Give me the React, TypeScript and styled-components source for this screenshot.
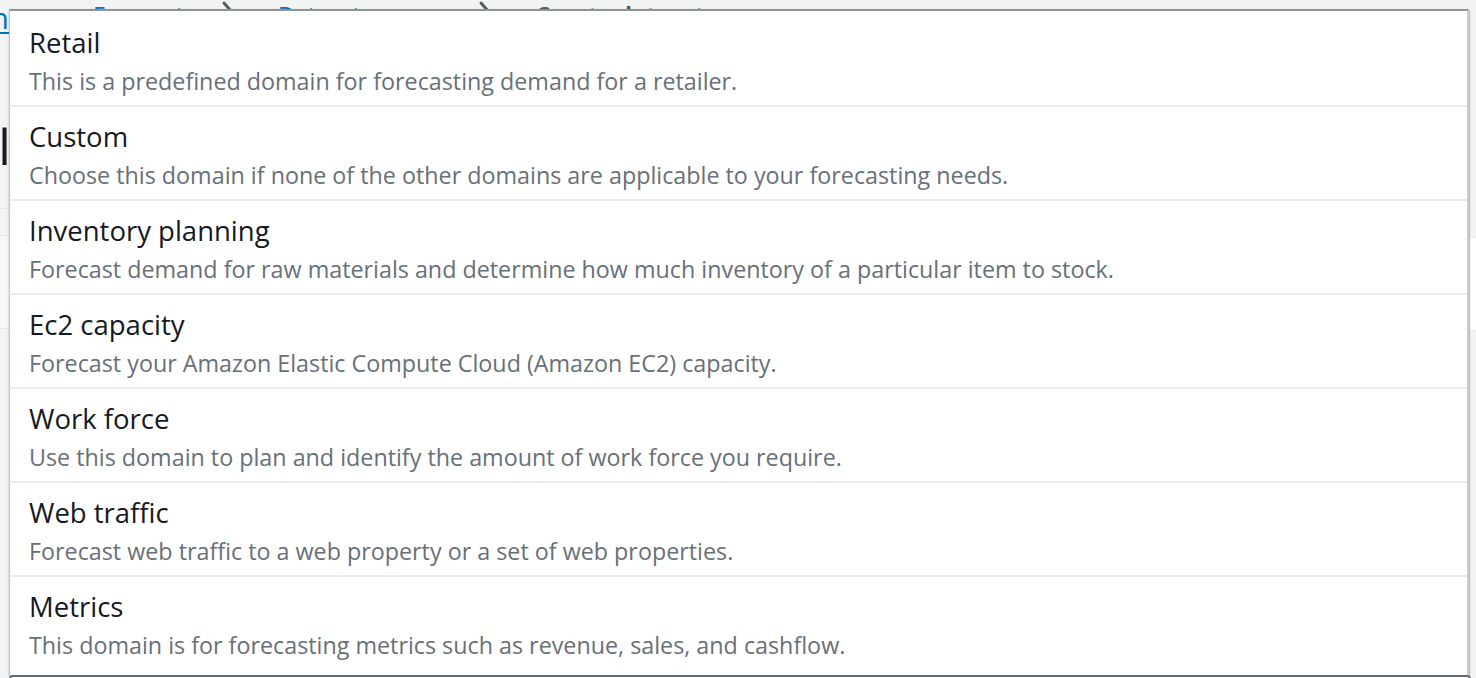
import React from "react";
import styled, { createGlobalStyle } from "styled-components";

const Global = createGlobalStyle`
  html, body { margin: 0; padding: 0; }
  body {
    width: 1476px;
    height: 678px;
    overflow: hidden;
    background: #f2f3f3;
    font-family: "Open Sans", "Noto Sans", Arial, sans-serif;
  }
`;

const Page = styled.div`
  position: relative;
  width: 1476px;
  height: 678px;
  overflow: hidden;
  background: #f2f3f3;
`;

const Body = styled.div`
  display: grid;
  grid-template-columns: 9px 1fr 6px;
  align-items: start;
`;

const Breadcrumbs = styled.nav`
  display: flex;
  align-items: flex-start;
  height: 28px;
  margin-top: 1px;
  padding-left: 84px;
  font-size: 23px;
  line-height: 28px;
  white-space: nowrap;
`;

const Crumb = styled.a<{ $current?: boolean }>`
  color: ${(p) => (p.$current ? "#545b64" : "#0073bb")};
  text-decoration: none;
  font-weight: ${(p) => (p.$current ? 700 : 400)};
`;

const Chevron = styled.svg`
  flex: none;
  width: 24px;
  height: 24px;
  margin: -1px 38px 0 32px;
  color: #545b64;
`;

const LeftStrip = styled.div`
  display: flex;
  flex-direction: column;
  align-items: flex-end;
  overflow: hidden;
  white-space: nowrap;
  height: 678px;
`;

const InfoLink = styled.a`
  margin-top: 0;
  font-size: 30px;
  line-height: 36px;
  color: #0073bb;
  text-decoration: underline;
  text-decoration-thickness: 2px;
  text-underline-offset: 3px;
`;

const Heading = styled.h1`
  margin: 80px -2px 0 0;
  font-size: 50px;
  line-height: 60px;
  font-weight: 400;
  color: #16191f;
`;

const Divider = styled.div`
  align-self: stretch;
  height: 1px;
  margin-top: 32px;
  background: #e4e7e7;
`;

const Card = styled.div`
  align-self: stretch;
  height: 92px;
  margin-top: 26px;
  background: #f8f8f8;
  border-top: 1px solid #e2e5e5;
  border-bottom: 1px solid #e2e5e5;
`;

const RightStrip = styled.div`
  display: flex;
  flex-direction: column;
  padding-top: 237px;
`;

const RightCard = styled.div`
  height: 92px;
  background: #ffffff;
  border-top: 1px solid #e9ebeb;
  border-bottom: 1px solid #e9ebeb;
`;

const Trigger = styled.div`
  position: absolute;
  left: 9px;
  top: 675px;
  width: 1458px;
  height: 40px;
  border: 2px solid #5f6b7a;
  border-radius: 4px;
  background: #fff;
`;

const Menu = styled.ul`
  position: absolute;
  left: 9px;
  top: 9px;
  bottom: 3px;
  width: 1460px;
  margin: 0;
  padding: 2px 0 0;
  box-sizing: border-box;
  list-style: none;
  display: flex;
  flex-direction: column;
  background: #ffffff;
  border-top: 2px solid #8d9696;
  border-left: 1px solid #c3c9c9;
  border-right: 2px solid #c8cdcd;
  box-shadow: 0 1px 2px rgba(0, 28, 36, 0.3), 1px 1px 1px rgba(0, 28, 36, 0.15);
`;

const Option = styled.li`
  display: flex;
  flex-direction: column;
  flex: none;
  height: 94px;
  padding: 13px 19px 0;
  box-sizing: border-box;
  border-bottom: 2px solid #eaeded;
  &:last-child {
    flex: 1;
    border-bottom: none;
  }
`;

const Title = styled.span`
  font-size: 27.5px;
  line-height: 34px;
  color: #16191f;
`;

const Desc = styled.span`
  margin-top: 6px;
  font-size: 23.3px;
  line-height: 30px;
  color: #687078;
`;

const options = [
  { title: "Retail", desc: "This is a predefined domain for forecasting demand for a retailer." },
  { title: "Custom", desc: "Choose this domain if none of the other domains are applicable to your forecasting needs." },
  { title: "Inventory planning", desc: "Forecast demand for raw materials and determine how much inventory of a particular item to stock." },
  { title: "Ec2 capacity", desc: "Forecast your Amazon Elastic Compute Cloud (Amazon EC2) capacity." },
  { title: "Work force", desc: "Use this domain to plan and identify the amount of work force you require." },
  { title: "Web traffic", desc: "Forecast web traffic to a web property or a set of web properties." },
  { title: "Metrics", desc: "This domain is for forecasting metrics such as revenue, sales, and cashflow." },
];

const ChevronIcon = () => (
  <Chevron viewBox="0 0 24 24" fill="none" stroke="currentColor" strokeWidth={3} strokeLinecap="round">
    <path d="M8 3 L16 12 L8 21" />
  </Chevron>
);

export default function App() {
  return (
    <Page>
      <Global />
      <Body>
        <LeftStrip>
          <InfoLink href="#">Learn</InfoLink>
          <Heading>Detail</Heading>
          <Divider />
          <Card />
        </LeftStrip>
        <Breadcrumbs aria-label="Breadcrumbs">
          <Crumb href="#">Forecast</Crumb>
          <ChevronIcon />
          <Crumb href="#">Dataset groups</Crumb>
          <ChevronIcon />
          <Crumb $current>Create dataset group</Crumb>
        </Breadcrumbs>
        <RightStrip>
          <RightCard />
        </RightStrip>
      </Body>
      <Menu role="listbox">
        {options.map((o) => (
          <Option key={o.title} role="option">
            <Title>{o.title}</Title>
            <Desc>{o.desc}</Desc>
          </Option>
        ))}
      </Menu>
      <Trigger />
    </Page>
  );
}
